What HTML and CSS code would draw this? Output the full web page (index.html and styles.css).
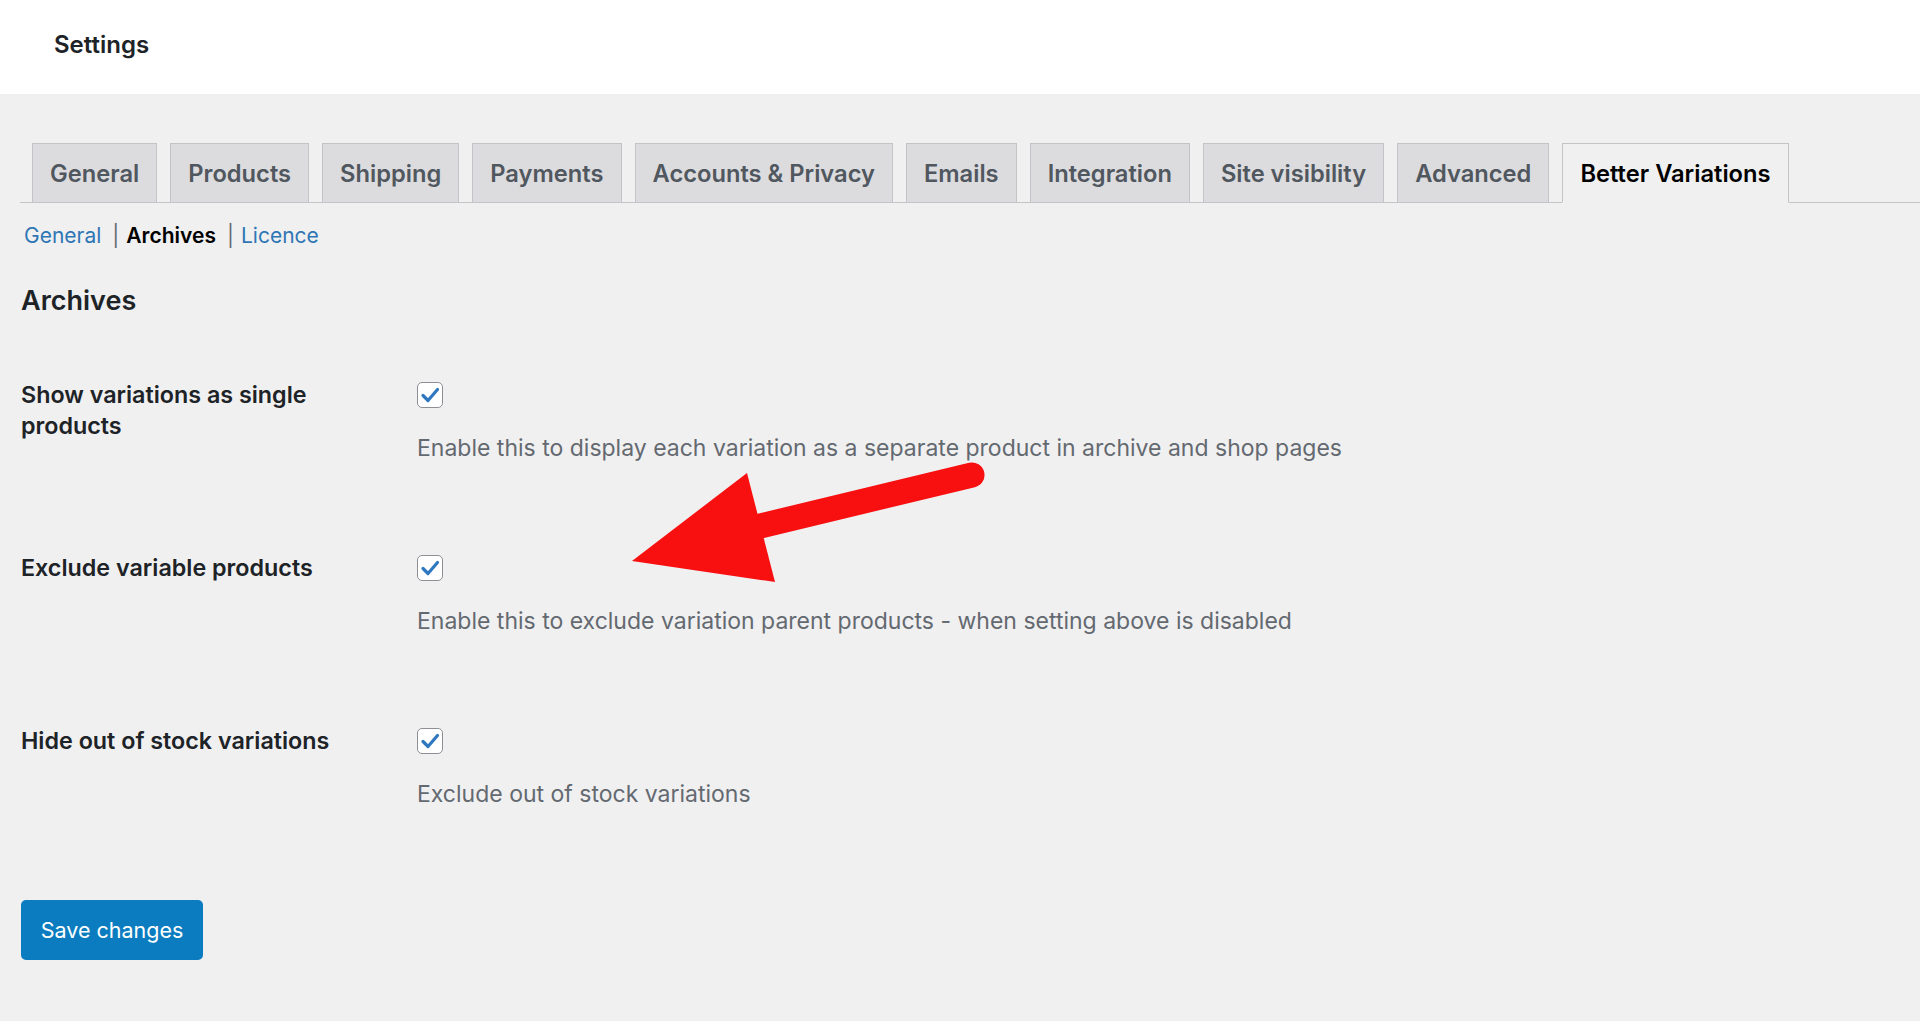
FILE: index.html
```html
<!DOCTYPE html>
<html lang="en">
<head>
<meta charset="utf-8">
<title>Settings</title>
<link rel="stylesheet" href="styles.css">
</head>
<body>
<header class="topbar">
  <h1 class="page-title">Settings</h1>
</header>
<main class="wrap">
  <nav class="tabs">
    <a class="tab">General</a>
    <a class="tab">Products</a>
    <a class="tab">Shipping</a>
    <a class="tab">Payments</a>
    <a class="tab">Accounts &amp; Privacy</a>
    <a class="tab">Emails</a>
    <a class="tab">Integration</a>
    <a class="tab">Site visibility</a>
    <a class="tab">Advanced</a>
    <a class="tab tab-active">Better Variations</a>
  </nav>
  <ul class="subnav">
    <li><a class="sublink">General</a><span class="sep">|</span></li>
    <li><a class="sublink current">Archives</a><span class="sep">|</span></li>
    <li><a class="sublink">Licence</a></li>
  </ul>
  <h2 class="section-title">Archives</h2>
  <div class="form-rows">
    <div class="row">
      <div class="label">Show variations as single products</div>
      <div class="field">
        <span class="checkbox"><svg viewBox="0 0 26 26" width="26" height="26"><path d="M6 13.5 L11 18.5 L20.5 7.5" fill="none" stroke="#2f78c0" stroke-width="3.2" stroke-linecap="round" stroke-linejoin="round"/></svg></span>
        <p class="description">Enable this to display each variation as a separate product in archive and shop pages</p>
      </div>
    </div>
    <div class="row">
      <div class="label">Exclude variable products</div>
      <div class="field">
        <span class="checkbox"><svg viewBox="0 0 26 26" width="26" height="26"><path d="M6 13.5 L11 18.5 L20.5 7.5" fill="none" stroke="#2f78c0" stroke-width="3.2" stroke-linecap="round" stroke-linejoin="round"/></svg></span>
        <p class="description">Enable this to exclude variation parent products - when setting above is disabled</p>
      </div>
    </div>
    <div class="row">
      <div class="label">Hide out of stock variations</div>
      <div class="field">
        <span class="checkbox"><svg viewBox="0 0 26 26" width="26" height="26"><path d="M6 13.5 L11 18.5 L20.5 7.5" fill="none" stroke="#2f78c0" stroke-width="3.2" stroke-linecap="round" stroke-linejoin="round"/></svg></span>
        <p class="description">Exclude out of stock variations</p>
      </div>
    </div>
  </div>
  <button class="save-btn" type="button">Save changes</button>
</main>
<svg class="annotation" viewBox="0 0 1920 1021" width="1920" height="1021" aria-hidden="true">
  <line x1="752" y1="528" x2="972" y2="475" stroke="#f80f0f" stroke-width="25" stroke-linecap="round"/>
  <polygon points="632,561 747,473 775,582" fill="#f80f0f"/>
</svg>
</body>
</html>
```

FILE: styles.css
```css
* { box-sizing: border-box; }

html, body {
  margin: 0;
  padding: 0;
}

body {
  position: relative;
  min-height: 1021px;
  background: #f0f0f1;
  font-family: Inter, "Liberation Sans", Arial, sans-serif;
  color: #1d2327;
  overflow: hidden;
}

.topbar {
  height: 94px;
  background: #ffffff;
  display: flex;
  align-items: center;
  padding: 0 0 6px 54px;
}

.page-title {
  margin: 0;
  font-size: 24px;
  font-weight: 600;
  color: #1d2327;
}

.wrap {
  padding: 0 0 0 21px;
}

.tabs {
  display: flex;
  gap: 13px;
  margin: 49px 0 0 -1px;
  padding-left: 12px;
  border-bottom: 1px solid #c3c4c7;
}

.tab {
  display: block;
  height: 60px;
  margin-bottom: -1px;
  padding: 0 17px;
  line-height: 60px;
  font-size: 23.7px;
  font-weight: 600;
  color: #50575e;
  background: #dcdcde;
  border: 1px solid #c3c4c7;
  white-space: nowrap;
}

.tab-active {
  background: #f0f0f1;
  color: #000000;
  border-bottom-color: #f0f0f1;
}

.subnav {
  list-style: none;
  display: flex;
  margin: 17px 0 0 0;
  padding: 0 0 0 3px;
  font-size: 21px;
  line-height: 31px;
}

.sublink {
  color: #2f76b5;
}

.sublink.current {
  color: #000000;
  font-weight: 600;
}

.sep {
  color: #646970;
  margin: 0 7px 0 11px;
}

.section-title {
  margin: 31px 0 0 0;
  font-size: 27px;
  line-height: 38px;
  font-weight: 600;
  color: #1d2327;
}

.form-rows {
  margin-top: 59px;
}

.row {
  display: grid;
  grid-template-columns: 396px 1fr;
  height: 173px;
}

.label {
  font-size: 23.3px;
  line-height: 31px;
  font-weight: 600;
  color: #1d2327;
  width: 345px;
}

.field {
  display: flex;
  flex-direction: column;
  align-items: flex-start;
}

.checkbox {
  display: block;
  width: 26px;
  height: 26px;
  margin-top: 3px;
  background: #ffffff;
  border: 1.5px solid #8c8f94;
  border-radius: 5px;
  overflow: hidden;
}

.checkbox svg {
  display: block;
  margin: -1.5px;
}

.description {
  margin: 25px 0 0 0;
  font-size: 23px;
  line-height: 31px;
  color: #646970;
}

.save-btn {
  display: block;
  margin-top: 2px;
  width: 182px;
  height: 60px;
  padding: 0;
  border: none;
  border-radius: 5px;
  background: #0a7cbf;
  color: #ffffff;
  font-family: inherit;
  font-size: 21.5px;
  font-weight: 400;
}

.annotation {
  position: absolute;
  top: 0;
  left: 0;
  pointer-events: none;
}
```
